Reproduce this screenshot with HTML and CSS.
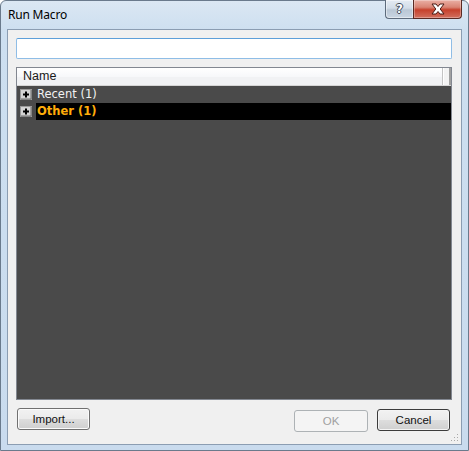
FILE: index.html
```html
<!DOCTYPE html>
<html>
<head>
<meta charset="utf-8">
<title>Run Macro</title>
<link rel="stylesheet" href="styles.css">
</head>
<body>
<div class="window">
  <div class="titlebar">
    <span class="title">Run Macro</span>
    <div class="caption">
      <div class="cap-btn help"><span class="help-glyph">?</span></div>
      <div class="cap-btn close">
        <svg width="16" height="12" viewBox="0 0 16 12">
          <path d="M2 1 L6 1 L8 3.5 L10 1 L14 1 L10.2 6 L14 11 L10 11 L8 8.5 L6 11 L2 11 L5.8 6 Z" fill="#ffffff" stroke="#4a1a14" stroke-width="1" stroke-linejoin="round"/>
        </svg>
      </div>
    </div>
  </div>
  <div class="client">
    <input class="search" type="text">
    <div class="list">
      <div class="header">
        <div class="hcell">Name</div>
        <div class="hend"></div>
      </div>
      <div class="row">
        <span class="expander"><svg width="12" height="11" viewBox="0 0 12 11"><rect x="0.5" y="0.5" width="11" height="10" fill="#d4d4d4" stroke="#9a9a9a"/><path d="M1 10 L11 10 L11 1" fill="none" stroke="#6e6e6e"/><path d="M6 2.5 V8.5 M3 5.5 H9" stroke="#000" stroke-width="2"/></svg></span>
        <span class="label">Recent (1)</span>
      </div>
      <div class="row">
        <span class="expander"><svg width="12" height="11" viewBox="0 0 12 11"><rect x="0.5" y="0.5" width="11" height="10" fill="#d4d4d4" stroke="#9a9a9a"/><path d="M1 10 L11 10 L11 1" fill="none" stroke="#6e6e6e"/><path d="M6 2.5 V8.5 M3 5.5 H9" stroke="#000" stroke-width="2"/></svg></span>
        <span class="label selected">Other (1)</span>
      </div>
    </div>
    <div class="footer">
      <button class="btn import">Import...</button>
      <div class="spacer"></div>
      <button class="btn ok" disabled>OK</button>
      <button class="btn cancel">Cancel</button>
    </div>
    <svg class="grip" width="8" height="8" viewBox="0 0 8 8">
      <rect x="6" y="0" width="1" height="1" fill="#a9a9a9"/>
      <rect x="3" y="3" width="1" height="1" fill="#a9a9a9"/>
      <rect x="6" y="3" width="1" height="1" fill="#a9a9a9"/>
      <rect x="0" y="6" width="1" height="1" fill="#a9a9a9"/>
      <rect x="3" y="6" width="1" height="1" fill="#a9a9a9"/>
      <rect x="6" y="6" width="1" height="1" fill="#a9a9a9"/>
    </svg>
  </div>
</div>
</body>
</html>
```
FILE: styles.css
```css
html, body {
  margin: 0;
  padding: 0;
  background: #ffffff;
}

.window {
  width: 469px;
  height: 451px;
  box-sizing: border-box;
  border: 1px solid #6a7a8c;
  border-radius: 6px 6px 0 0;
  background: linear-gradient(#dbe7f3 0px, #cddff0 30px, #c9dbee 100%);
  padding: 0 6px 5px 6px;
  display: flex;
  flex-direction: column;
}

.titlebar {
  height: 28px;
  display: flex;
  align-items: flex-start;
  flex: none;
}

.title {
  font-family: "Noto Sans", "Liberation Sans", sans-serif;
  font-size: 12px;
  color: #000;
  padding-left: 1px;
  margin-top: 6px;
  line-height: 16px;
  letter-spacing: -0.2px;
}

.caption {
  margin-left: auto;
  display: flex;
  margin-top: -1px;
}

.cap-btn {
  height: 19px;
  box-sizing: border-box;
  border: 1px solid #5d6b7c;
  border-top: none;
  display: flex;
  align-items: center;
  justify-content: center;
}

.help {
  width: 28px;
  border-radius: 0 0 0 4px;
  border-right: none;
  background: linear-gradient(#e4ebf3 0%, #d3dde8 45%, #bac7d5 55%, #c9d5e2 100%);
  box-shadow: inset 0 0 0 1px rgba(255,255,255,0.45);
}

.help-glyph {
  font-family: "DejaVu Sans", sans-serif;
  font-weight: bold;
  font-size: 12px;
  color: #ffffff;
  line-height: 12px;
  text-shadow: 1px 0 0 #3d4a59, -1px 0 0 #3d4a59, 0 1px 0 #3d4a59, 0 -1px 0 #3d4a59;
}

.close {
  width: 49px;
  border-radius: 0 0 4px 0;
  border-color: #5a2a24;
  background: linear-gradient(#eab0a5 0%, #d98474 40%, #c6412c 55%, #d2705f 100%);
  box-shadow: inset 0 0 0 1px rgba(255,255,255,0.3);
}

.client {
  flex: 1;
  position: relative;
  background: #f0f0f0;
  border: 1px solid #8b9db2;
  padding: 8px 9px 0 8px;
  display: flex;
  flex-direction: column;
}

.search {
  display: block;
  height: 21px;
  box-sizing: border-box;
  width: 100%;
  margin: 0;
  border: 1px solid #8fbde6;
  border-top-color: #5d9fd9;
  background: #ffffff;
  border-radius: 2px;
  outline: none;
  flex: none;
}

.list {
  margin-top: 8px;
  height: 333px;
  box-sizing: border-box;
  border: 1px solid #828790;
  background: #4a4a4a;
  flex: none;
}

.header {
  height: 18px;
  box-sizing: border-box;
  display: flex;
  background: linear-gradient(#ffffff 0%, #f7f8fa 50%, #f1f2f4 51%, #f1f2f4 100%);
  border-bottom: 1px solid #d5d5d5;
}

.hcell {
  flex: 1;
  font-family: "Liberation Sans", sans-serif;
  font-size: 12.5px;
  color: #1a1a1a;
  padding-left: 6px;
  line-height: 17px;
  border-right: 1px solid #c4c4c4;
}

.hend {
  width: 5px;
  border-right: 2px solid #a0a0a0;
  border-left: 1px solid #ffffff;
  background: #f3f3f3;
}

.row {
  height: 17px;
  display: flex;
  align-items: center;
}

.expander {
  width: 12px;
  height: 11px;
  margin-left: 3px;
  margin-right: 4px;
  display: block;
}

.expander svg {
  display: block;
}

.label {
  flex: 1;
  height: 17px;
  font-family: "DejaVu Sans", sans-serif;
  font-size: 11.5px;
  line-height: 17px;
  color: #f2f2f2;
  padding-left: 1px;
}

.label.selected {
  background: #000000;
  color: #ffad0a;
  font-weight: bold;
}

.footer {
  margin-top: 9px;
  display: flex;
  align-items: flex-start;
}

.spacer {
  flex: 1;
}

.btn {
  height: 22px;
  width: 73px;
  box-sizing: border-box;
  border: 1px solid #707070;
  border-radius: 3px;
  background: linear-gradient(#f2f2f2 0%, #ebebeb 48%, #dddddd 52%, #cfcfcf 100%);
  box-shadow: inset 0 0 0 1px #fbfbfb;
  font-family: "Liberation Sans", sans-serif;
  font-size: 11.5px;
  color: #111;
  padding: 0;
  margin: 0;
}

.import {
  margin-left: 1px;
  margin-top: -1px;
}

.ok {
  width: 74px;
  margin-top: 1px;
  border-color: #adb2b5;
  background: #f4f4f4;
  box-shadow: none;
  color: #a0a0a0;
}

.cancel {
  margin-left: 9px;
  margin-right: 2px;
  border-color: #3c3c3c;
  box-shadow: inset 0 0 0 1px #f4f4f4;
}

.grip {
  position: absolute;
  right: 2px;
  bottom: 2px;
}
```
